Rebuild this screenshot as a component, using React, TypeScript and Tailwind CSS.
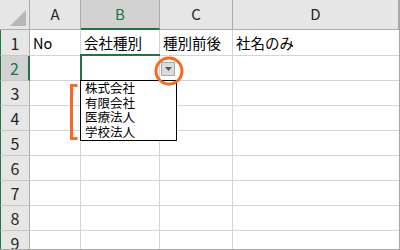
import React from 'react';

const cols = 'grid grid-cols-[30px_51px_79px_73px_1fr]';
const green = '#217346';

const rows: string[][] = [
  ['No', '会社種別', '種別前後', '社名のみ'],
  ['', '', '', ''],
  ['', '', '', ''],
  ['', '', '', ''],
  ['', '', '', ''],
  ['', '', '', ''],
  ['', '', '', ''],
  ['', '', '', ''],
  ['', '', '', ''],
];

const items = ['株式会社', '有限会社', '医療法人', '学校法人'];

function HeaderCell({ label, selected }: { label: string; selected?: boolean }) {
  return (
    <div
      className={
        selected
          ? 'flex items-center justify-center bg-[#d2d2d2] border-r border-[#ababab] border-b-2 border-b-[#217346] text-[#217346] text-[15px]'
          : 'flex items-center justify-center bg-[#e6e6e6] border-r border-[#ababab] border-b border-b-[#ababab] text-[#262626] text-[15px]'
      }
    >
      {label}
    </div>
  );
}

export default function App() {
  return (
    <div className="relative w-[400px] h-[250px] overflow-hidden bg-white border-r border-b border-[#a6a6a6] font-['Noto_Sans_CJK_JP','Liberation_Sans',sans-serif]">
      {/* column headers */}
      <div className={`${cols} h-[30px]`}>
        <div className="relative bg-[#e6e6e6] border-r border-b border-[#ababab]">
          <svg className="absolute left-0 top-0" width="29" height="29" viewBox="0 0 29 29">
            <polygon points="26,10 26,26 10,26" fill="#b7b7b7" />
          </svg>
        </div>
        <HeaderCell label="A" />
        <HeaderCell label="B" selected />
        <HeaderCell label="C" />
        <HeaderCell label="D" />
      </div>

      {/* body */}
      {rows.map((r, i) => (
        <div key={i} className={`${cols} ${i === 0 ? 'h-[26px]' : 'h-[25px]'}`}>
          <div
            className={
              i === 1
                ? 'flex items-center justify-center bg-[#d2d2d2] border-l border-l-[#217346] border-r-2 border-r-[#217346] border-b border-b-[#c6c6c6] text-[#217346] text-[16px]'
                : 'flex items-center justify-center bg-[#e6e6e6] border-l border-l-[#217346] border-r border-r-[#ababab] border-b border-b-[#c6c6c6] text-[#262626] text-[16px]'
            }
          >
            {i + 1}
          </div>
          {r.map((t, j) => (
            <div
              key={j}
              className={`flex items-center pl-[3px] text-[14.5px] text-black border-b border-[#d4d4d4] ${j < 3 ? 'border-r' : ''}`}
            >
              {t}
            </div>
          ))}
        </div>
      ))}

      {/* selected cell B2 */}
      <div className="absolute left-[80px] top-[54px] w-[80px] h-[27px] border-t-2 border-l-2" style={{ borderColor: green }} />

      {/* dropdown button */}
      <div className="absolute left-[161px] top-[62px] w-[14px] h-[14px] bg-[#dcdcdc] border border-[#a8a8a8] flex items-center justify-center">
        <svg width="7" height="4" viewBox="0 0 7 4">
          <polygon points="0,0 7,0 3.5,4" fill="#555555" />
        </svg>
      </div>

      {/* dropdown list */}
      <div className="absolute left-[80px] top-[80px] w-[97px] h-[61px] bg-white border border-black pl-[4px] text-[12.5px] leading-[14.5px] text-black">
        {items.map((it) => (
          <div key={it}>{it}</div>
        ))}
      </div>

      {/* annotations */}
      <svg className="absolute left-[154px] top-[56px]" width="30" height="30" viewBox="0 0 30 30">
        <circle cx="15" cy="15" r="13" fill="none" stroke="#f26c25" strokeWidth="3" />
      </svg>
      <svg className="absolute left-[66px] top-[80px]" width="16" height="64" viewBox="0 0 16 64">
        <polyline points="11.5,5.5 5.5,5.5 5.5,58.5 11.5,58.5" fill="none" stroke="#f26c25" strokeWidth="3" />
      </svg>
    </div>
  );
}
